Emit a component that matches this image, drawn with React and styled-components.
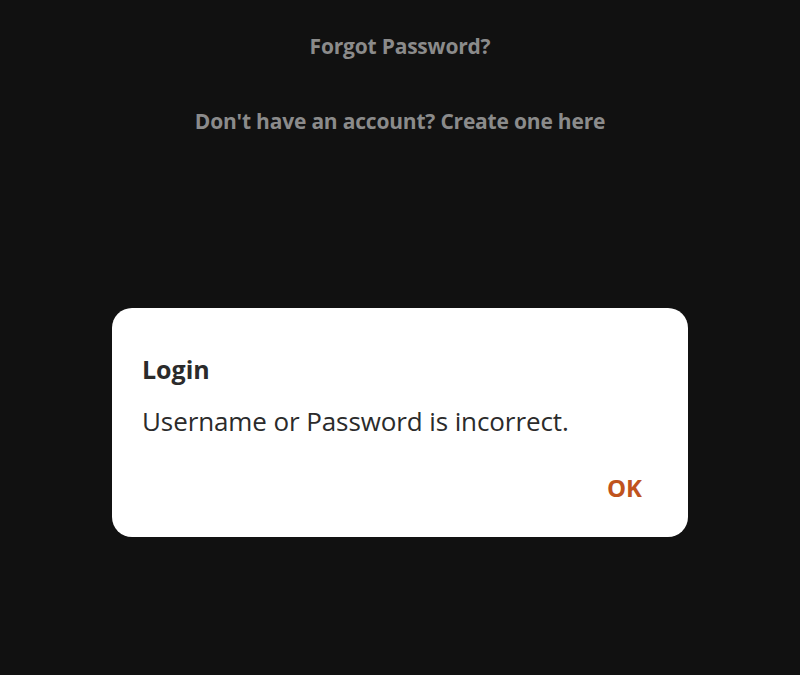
import React from "react";
import styled, { createGlobalStyle } from "styled-components";

const GlobalStyle = createGlobalStyle`
  html, body {
    margin: 0;
    padding: 0;
    background: #111111;
    font-family: "Open Sans", "Noto Sans", sans-serif;
  }
`;

// Login page behind the dialog
const Page = styled.div`
  width: 800px;
  height: 675px;
  background: #111111;
  display: flex;
  flex-direction: column;
  align-items: center;
  padding-top: 31px;
  box-sizing: border-box;
`;

const LinkText = styled.a`
  color: #8b8b8b;
  font-size: 21px;
  font-weight: 700;
  letter-spacing: -0.2px;
  text-decoration: none;
  line-height: 30px;
  margin-top: ${(p) => p.gap || 0}px;
`;

// Modal overlay and dialog
const Overlay = styled.div`
  position: fixed;
  inset: 0;
  display: flex;
  justify-content: center;
  align-items: flex-start;
  padding-top: 308px;
`;

const Dialog = styled.div`
  width: 576px;
  height: 229px;
  box-sizing: border-box;
  background: #ffffff;
  border-radius: 20px;
  padding: 38px 46px 0 30px;
  display: flex;
  flex-direction: column;
`;

const Title = styled.h2`
  margin: 0;
  font-size: 25px;
  font-weight: 700;
  color: #2b2b2b;
  line-height: 46px;
`;

const Message = styled.p`
  margin: 6px 0 0;
  font-size: 26px;
  font-weight: 400;
  letter-spacing: -0.1px;
  color: #2b2b2b;
  line-height: 46px;
`;

const Actions = styled.div`
  display: flex;
  justify-content: flex-end;
  margin-top: 28px;
`;

const TextButton = styled.button`
  border: none;
  background: none;
  padding: 0;
  font-family: inherit;
  font-size: 24px;
  font-weight: 700;
  color: #c0531d;
  line-height: 32px;
  cursor: pointer;
`;

export default function App() {
  return (
    <>
      <GlobalStyle />
      <Page>
        <LinkText href="#">Forgot Password?</LinkText>
        <LinkText href="#" gap={45}>
          Don't have an account? Create one here
        </LinkText>
      </Page>
      <Overlay>
        <Dialog>
          <Title>Login</Title>
          <Message>Username or Password is incorrect.</Message>
          <Actions>
            <TextButton>OK</TextButton>
          </Actions>
        </Dialog>
      </Overlay>
    </>
  );
}
